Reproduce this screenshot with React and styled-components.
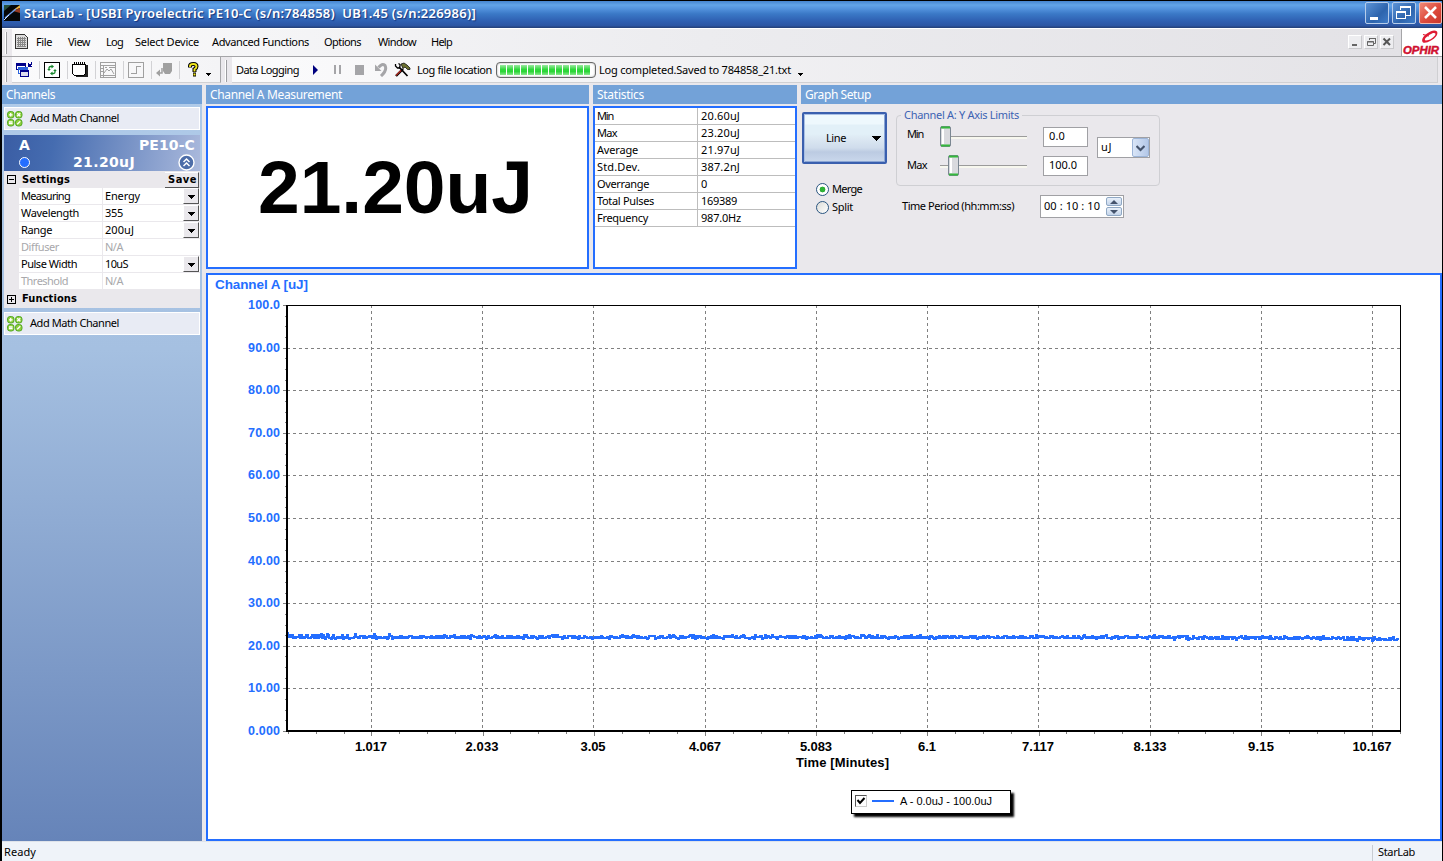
import React, { useLayoutEffect, useRef } from 'react'
import styled, { createGlobalStyle, css } from "styled-components"

const blue = '#246eff'
const face = '#eae8ec'
const ui = '"Noto Sans", "Open Sans", sans-serif'
const wide = '"DejaVu Sans", sans-serif'

const GlobalStyle = createGlobalStyle`
  * { box-sizing: border-box; }
  body {
    margin: 0;
    background: #000;
    font: 11px/14px ${ui};
    color: #000;
    overflow: hidden;
  }
  svg { display: block; flex: none; }
`

const TextBox = styled.span`
  display: inline-block;
  flex: none;
  white-space: pre;
`

// tracks the text so that it fills the given width
const Text = ({ w, children, ...rest }) => {
  const ref = useRef(null)

  useLayoutEffect(() => {
    const el = ref.current
    el.style.letterSpacing = '0px'
    const natural = el.getBoundingClientRect().width
    el.style.letterSpacing = (w - natural) / el.textContent.length + 'px'
  }, [w, children])

  return <TextBox ref={ref} {...rest}>{children}</TextBox>
}

const Window = styled.div`
  width: 1443px;
  height: 861px;
  padding: 1px 1px 0 2px;
  background: #000;
  display: flex;
  flex-direction: column;
`

const TitleBar = styled.header`
  height: 27px;
  flex: none;
  display: flex;
  align-items: center;
  padding: 0 0 3px 2px;
  background: linear-gradient(#4584cf 0, #62a4e8 4px, #5696e0 7px, #3a78c6 13px, #2f60b2 20px, #2c55a2 25px, #26447f 26px);
`

const WindowTitle = styled.h1`
  margin: 0 auto 0 4px;
  font: 600 13px/22px "Noto Sans", sans-serif;
  color: #fff;
  text-shadow: 1px 1px 1px #16337a;
`

const CaptionButton = styled.div`
  width: 24px;
  height: 22px;
  margin-left: 3px;
  border: 1px solid #b7cdea;
  border-radius: 2px;
  background: linear-gradient(135deg, #5b93d6, #2d64ad 60%, #3f7cc8);
  ${p => p.$close && css`
    width: 23px;
    border-color: #f0b9ae;
    background: linear-gradient(135deg, #f08a78, #dd4a3c 55%, #c9362c);
  `}
`

const BarRow = styled.div`
  height: ${p => p.$h}px;
  flex: none;
  display: flex;
  background: ${face};
  border-top: 1px solid ${p => p.$line || '#fff'};
`

const Grip = styled.div`
  width: 2px;
  height: 22px;
  margin: 3px 5px 0 ${p => p.$ml || 3}px;
  border-right: 1px solid #9d9da1;
  border-left: 1px solid #fff;
`

const MenuBar = styled.nav`
  flex: 1;
  display: flex;
  align-items: center;
  padding: 0 0 2px 3px;
  background: linear-gradient(90deg, #fafafb, #ececef 50%, #e3e2e6);
`

const MenuItem = styled.div`
  width: ${p => p.$w}px;
`

const Spring = styled.div`
  flex: 1;
`

const MdiButton = styled.div`
  width: 14px;
  height: 14px;
  margin-right: 2px;
  border: 1px solid #fff;
  border-right-color: #c9c9cc;
  border-bottom-color: #c9c9cc;
  background: #ededf0;
`

const Brand = styled.div`
  width: 41px;
  background: #fff;
  border-left: 1px solid #a5a5a8;
`

const ToolGroup = styled.div`
  display: flex;
  align-items: center;
  height: 26px;
  width: ${p => p.$w ? p.$w + 'px' : 'auto'};
  ${p => !p.$w && 'flex: 1; margin-right: 4px;'}
  padding-left: 4px;
  background: linear-gradient(90deg, #fbfbfc, ${p => p.$w ? '#f4f4f6' : '#e3e2e6'});
  border-bottom: 1px solid #d0d0d3;
  border-right: 1px solid ${p => p.$w ? '#a5a5a8' : '#cfcfd2'};
`

const Tool = styled.div`
  width: ${p => p.$w || 28}px;
  height: 18px;
  flex: none;
  display: flex;
  align-items: center;
  border-right: 1px solid ${p => p.$sep ? '#d2d2d5' : 'transparent'};
  margin-right: ${p => p.$mr || 0}px;
`

const Overflow = styled.div`
  padding: 10px 0 0 ${p => p.$pl || 0}px;
`

const Progress = styled.div`
  width: 100px;
  height: 16px;
  flex: none;
  margin: 0 3px 0 4px;
  padding: 2px 3px;
  display: flex;
  gap: 1px;
  border: 1px solid #686868;
  border-radius: 4px;
  background: #fff;
  box-shadow: inset 0 0 2px #999;
`

const Block = styled.i`
  width: 6px;
  height: 10px;
  background: linear-gradient(#9be9a0, #2fd83b 45%, #2bd637 65%, #8be68f);
`

const Main = styled.main`
  flex: 1;
  min-height: 0;
  display: grid;
  grid-template-columns: 200px 1fr;
  column-gap: 4px;
  padding-top: 1px;
  background: ${face};
`

const Head = styled.h2`
  height: 19px;
  margin: 0;
  padding-left: 4px;
  font: 12px/20px ${ui};
  color: #fff;
  background: #73a2d8;
`

const Sidebar = styled.aside`
  display: flex;
  flex-direction: column;
  background: linear-gradient(#b0cbe9, #a5c0e1 35%, #6684b9);
`

const MathButton = styled.button`
  height: 23px;
  margin: ${p => p.$mt || 0}px 2px 0 2px;
  padding: 0 0 2px 2px;
  display: flex;
  align-items: center;
  gap: 7px;
  font: inherit;
  border: 1px solid #fff;
  background: #e8ebf4;
  svg { margin-top: 2px; }
`

const Device = styled.section`
  margin: 5px 2px 4px 2px;
  background: ${face};
`

const DeviceHead = styled.div`
  height: 36px;
  padding: 2px 5px 0 15px;
  background: linear-gradient(100deg, #3a5da4, #456cb0 25%, #aab9dc);
  font: bold 14px/17px ${wide};
  color: #fff;
`

const HeadLine = styled.div`
  display: flex;
  justify-content: space-between;
  align-items: center;
  height: 17px;
`

const Dot = styled.i`
  width: 11px;
  height: 11px;
  border: 1px solid #fff;
  border-radius: 50%;
  background: ${blue};
`

const Section = styled.div`
  height: ${p => p.$h || 17}px;
  display: flex;
  align-items: center;
  gap: 6px;
  padding-left: 3px;
  font: bold 11px/14px "DejaVu Sans Condensed", "DejaVu Sans", sans-serif;
`

const SaveButton = styled.div`
  height: 16px;
  margin: 0 1px 0 auto;
  padding: 0 1px 0 3px;
  border-right: 1px solid #555;
  border-bottom: 1px solid #555;
  border-top: 1px solid #fff;
`

const Property = styled.div`
  height: 17px;
  margin-left: 15px;
  display: grid;
  grid-template-columns: 84px 1fr 17px;
  align-items: center;
  border-bottom: 1px solid ${face};
  background: #fff;
  color: ${p => p.$off ? '#a8a8ab' : '#000'};
`

const PropertyName = styled.div`
  height: 16px;
  line-height: 16px;
  padding-left: 2px;
  border-right: 1px solid ${face};
`

const PropertyValue = styled.div`
  height: 16px;
  line-height: 16px;
  padding-left: 2px;
`

const DropButton = styled.div`
  width: 16px;
  height: 16px;
  padding: 6px 0 0 4px;
  background: ${face};
  border: 1px solid #fff;
  border-right-color: #555;
  border-bottom-color: #555;
`

const Content = styled.div`
  display: flex;
  flex-direction: column;
  min-width: 0;
`

const TopPanels = styled.div`
  height: 184px;
  margin-bottom: 4px;
  flex: none;
  display: grid;
  grid-template-columns: 383px 204px 1fr;
  column-gap: 4px;
`

const Framed = styled.div`
  height: 163px;
  margin-top: 2px;
  border: 2px solid ${blue};
  background: #fff;
`

const Reading = styled(Framed)`
  display: flex;
  padding: 41px 0 0 50px;
  font: bold 75px/76px "Liberation Sans", Arial, sans-serif;
`

const StatRow = styled.div`
  height: 17px;
  display: grid;
  grid-template-columns: 102px 1fr;
  line-height: 16px;
  border-bottom: 1px solid #bdbdbd;
  > div { padding-left: 2px; }
  > div + div { border-left: 1px solid #bdbdbd; padding-left: 3px; }
`

const Setup = styled.div`
  display: flex;
  align-items: flex-start;
  padding: 8px 0 0 1px;
`

const SetupLeft = styled.div`
  width: 94px;
  flex: none;
`

const LineButton = styled.button`
  width: 85px;
  height: 52px;
  margin-bottom: 16px;
  padding: 0 4px 0 22px;
  display: flex;
  align-items: center;
  justify-content: space-between;
  font: inherit;
  border: 2px solid #3a5fae;
  border-radius: 2px;
  background: linear-gradient(#eef8fd 0 10px, #e2f0f8 11px 20px, #dde9f3 24px, #cfdcec 34px, #bccbe2 38px, #cad8ec);
  box-shadow: inset 1px 1px 0 #a9bfe4, inset -1px -1px 0 #8ba5d4;
`

const RadioLine = styled.label`
  display: flex;
  align-items: center;
  gap: 3px;
  height: 18px;
  margin-left: 14px;
`

const Radio = styled.i`
  width: 13px;
  height: 13px;
  border: 1px solid #2a5580;
  border-radius: 50%;
  background: ${p => p.$on
    ? 'radial-gradient(circle, #2fb336 0 2px, #23a52b 2.6px, #fff 3.2px)'
    : 'linear-gradient(135deg, #dcdcd8, #fff)'};
`

const SetupRight = styled.div`
  width: 264px;
`

const Limits = styled.fieldset`
  width: 264px;
  height: 78px;
  margin: -4px 0 0;
  padding: 0 0 0 10px;
  border: 1px solid #cfcfd3;
  border-radius: 4px;
  display: flex;
  legend {
    height: 14px;
    margin-left: -6px;
    padding: 0 3px;
    color: #3c63b3;
  }
`

const LimitRow = styled.div`
  height: 29px;
  display: flex;
  align-items: center;
`

const LimitName = styled.div`
  width: 32px;
  padding-bottom: ${p => p.$up}px;
`

const Field = styled.div`
  width: ${p => p.$w}px;
  height: ${p => p.$h}px;
  margin-left: ${p => p.$ml || 0}px;
  padding-left: ${p => p.$pl}px;
  display: flex;
  align-items: center;
  justify-content: space-between;
  line-height: 12px;
  border: 1px solid #a0a0a4;
  background: #fff;
  > span { padding-bottom: 2px; }
`

const Units = styled.div`
  padding: 15px 0 0 9px;
`

const Period = styled.div`
  display: flex;
  align-items: center;
  padding: 9px 0 0 6px;
`

const PeriodName = styled.div`
  width: 138px;
  padding: 0 0 2px;
`

const SpinColumn = styled.div`
  margin-right: 1px;
  display: grid;
  gap: 1px;
`

const SpinButton = styled.div`
  width: 16px;
  height: 9px;
  padding: 2px 0 0 3px;
  border: 1px solid #90a8c4;
  border-radius: 2px;
  background: linear-gradient(#e8f0fa, #c5d5ea);
`

const ComboArrow = styled.div`
  width: 17px;
  height: 19px;
  padding: 6px 0 0 3px;
  border: 1px solid #9db5d8;
  border-radius: 2px;
  background: linear-gradient(90deg, #d9e5f7, #b4c8e8);
`

const ChartPanel = styled.div`
  position: relative;
  height: 568px;
  border: 2px solid ${blue};
  background: #fff;
`

const Legend = styled.div`
  position: absolute;
  left: 643px;
  top: 515px;
  width: 160px;
  height: 24px;
  display: flex;
  align-items: center;
  padding: 0 0 2px 3px;
  border: 1px solid #000;
  background: #fff;
  box-shadow: 3px 3px 2px #000;
  font-family: "Liberation Sans", Arial, sans-serif;
`

const LegendBox = styled.div`
  width: 12px;
  height: 12px;
  border: 1px solid #555;
  border-right-color: #ccc;
  border-bottom-color: #ccc;
`

const LegendLine = styled.i`
  width: 22px;
  height: 2px;
  margin: 0 6px 0 5px;
  background: ${blue};
`

const StatusBar = styled.footer`
  height: 20px;
  flex: none;
  padding: 3px 0 0 2px;
  display: flex;
  justify-content: space-between;
  background: #eff3f9;
  border-top: 1px solid #dfe3ea;
`

const StatusCell = styled.div`
  width: 70px;
  padding-left: 5px;
  border-left: 1px solid #c8ccd2;
`

const menu = [
  ['File', 16, 32], ['View', 22, 38], ['Log', 17, 29], ['Select Device', 64, 77],
  ['Advanced Functions', 97, 112], ['Options', 37, 54], ['Window', 38, 53], ['Help', 21, 40],
]

const properties = [
  ['Measuring', 49, 'Energy', 35, true],
  ['Wavelength', 58, '355', 18, true],
  ['Range', 31, '200uJ', 29, true],
  ['Diffuser', 38, 'N/A', 18, false],
  ['Pulse Width', 56, '10uS', 23, true],
  ['Threshold', 47, 'N/A', 18, false],
]

const stats = [
  ['Min', 16, '20.60uJ', 39],
  ['Max', 20, '23.20uJ', 39],
  ['Average', 41, '21.97uJ', 39],
  ['Std.Dev.', 43, '387.2nJ', 39],
  ['Overrange', 52, '0', 6],
  ['Total Pulses', 57, '169389', 36],
  ['Frequency', 51, '987.0Hz', 40],
]

const Down = ({ w = 7, color = '#000' }) => (
  <svg width={w} height={(w + 1) / 2} shapeRendering="crispEdges">
    <path d={`M0 0H${w}L${w / 2} ${(w + 1) / 2}z`} fill={color} />
  </svg>
)

const AppIcon = () => (
  <svg width="16" height="16">
    <rect width="16" height="16" fill="#050708" />
    <path d="M0 6L7 0H0z" fill="#27503a" />
    <path d="M16 0L8 6L16 3z" fill="#e8b340" />
    <path d="M16 3L9 6L16 8z" fill="#933b22" />
    <path d="M1 13L7 8L12 4" stroke="#699bec" strokeWidth="1.5" fill="none" />
    <path d="M0 15L5 10" stroke="#cfe5ff" />
  </svg>
)

const SheetIcon = () => (
  <svg width="14" height="16" shapeRendering="crispEdges">
    <path d="M.5 .5H9.5L12.5 3.5V14.5H.5z" fill="#ddd" stroke="#333" />
    <path d="M3.5 3V13M5.5 3V13M7.5 3V13M9.5 3V13M2 4.5H11M2 6.5H11M2 8.5H11M2 10.5H11M2 12.5H11" stroke="#888" />
  </svg>
)

const WindowsIcon = () => (
  <svg width="17" height="16" shapeRendering="crispEdges">
    <path d="M.5 1.5H9.5V7.5H.5z" fill="#fff" stroke="#00008b" /><path d="M0 1H10V4H0z" fill="#00008b" />
    <path d="M2.5 5.5H11.5V11.5H2.5z" fill="#fff" stroke="#2b62dc" /><path d="M2 5H12V8H2z" fill="#2b62dc" />
    <path d="M4.5 8.5H12.5V14.5H4.5z" fill="#dde" stroke="#00008b" /><path d="M4 8H13V10H4z" fill="#00008b" />
    <path d="M15.5 0V2.5H12M12.5 1V5M13 4.5H16M13 3.5H15" stroke="#00008b" fill="none" />
  </svg>
)

const RefreshIcon = () => (
  <svg width="16" height="16">
    <rect x=".5" y=".5" width="15" height="15" fill="#fff" stroke="#000" />
    <path d="M5 7.5V6Q5 4.5 6.5 4.5H8M11 8.5V10Q11 11.5 9.5 11.5H8" stroke="#16852c" strokeWidth="1.3" fill="none" />
    <path d="M7.5 2.5V6.5L10 4.5zM8.5 9.5V13.5L6 11.5zM3.2 7H6.8L5 9zM9.2 9H12.8L11 7z" fill="#16852c" />
  </svg>
)

const PadIcon = () => (
  <svg width="17" height="16" shapeRendering="crispEdges">
    <path d="M3 3H16V15H4z" fill="#222" />
    <path d="M.5 2.5H13.5V11.5L11.5 13.5H2.5L.5 11.5z" fill="#fff" stroke="#000" />
    <path d="M2 1.5H13" stroke="#000" strokeWidth="3" strokeDasharray="1 1" />
  </svg>
)

const GraphIcon = () => (
  <svg width="16" height="16" fill="none" stroke="#a0a0a0">
    <path d="M.5 .5H15.5V15.5H.5zM0 3.5H16M3.5 4V15M1 13.5H15M5 5.5H7M9 5.5H15M1 6.5H3M1 9.5H3" shapeRendering="crispEdges" />
    <path d="M4 11L7 7L9 9L11 7L14 12" />
  </svg>
)

const StepIcon = () => (
  <svg width="16" height="16" fill="none" stroke="#a0a0a0" shapeRendering="crispEdges">
    <path d="M.5 .5H15.5V15.5H.5zM3 11.5H8.5V4.5H13" />
  </svg>
)

const ProbeIcon = () => (
  <svg width="17" height="16" fill="#a0a0a0">
    <path d="M7 1H16V9L14 12H9L7 9zM0 11L4 7.5V14.5z" />
    <path d="M3 11H6V6" fill="none" stroke="#a0a0a0" strokeWidth="1.5" />
  </svg>
)

const HelpIcon = () => (
  <svg width="11" height="15" fill="none">
    <path d="M2 5.5V4Q2 2 5.5 2Q8.5 2 8.5 4.5Q8.5 6 6.5 7.2V10M5 12.5H8" stroke="#000" strokeWidth="4" />
    <path d="M2 5V4Q2 2 5.5 2Q8.5 2 8.5 4.5Q8.5 6 6.5 7.2V9.5M5.5 12.5H7.5" stroke="#f2e71d" strokeWidth="1.9" />
  </svg>
)

const UndoIcon = () => (
  <svg width="14" height="14" fill="none" stroke="#a5a5a8">
    <path d="M4.5 4.5Q8 0 11 2.5Q13.5 7 7 13" strokeWidth="3" />
    <path d="M1 1.5V8H7.5z" fill="#a5a5a8" stroke="none" />
  </svg>
)

const ToolsIcon = () => (
  <svg width="17" height="16" fill="none">
    <path d="M2 14L9 7" stroke="#000" strokeWidth="2.4" /><path d="M2 13.5L8 7.5" stroke="#b12a20" strokeWidth="1.2" />
    <path d="M13.5 14L5 5" stroke="#000" strokeWidth="1.7" />
    <path d="M1.5 2V4L3.5 6H5.5L6 4V2.5L4.5 1.5" stroke="#000" strokeWidth="1.3" />
    <path d="M7 2L10 1L13 3L16 6V7.5H13.5L11 5L9 6.5z" fill="#6b7030" stroke="#000" strokeWidth=".7" />
  </svg>
)

const MathIcon = () => (
  <svg width="16" height="16">
    <g fill="#8fd03c" stroke="#4aa31d" strokeWidth=".9">
      <rect x=".5" y=".5" width="6.5" height="6.5" rx="2.5" /><rect x="8.5" y=".5" width="6.5" height="6.5" rx="2.5" />
      <rect x=".5" y="8.5" width="6.5" height="6.5" rx="2.5" /><rect x="8.5" y="8.5" width="6.5" height="6.5" rx="2.5" />
    </g>
    <path d="M3.7 2V5.6M2 3.8H5.6M10.2 2.2L13.3 5.3M13.3 2.2L10.2 5.3M2 11H5.6M2 12.7H5.6M10.2 13.3L13.3 10.2" stroke="#fff" strokeWidth="1.3" />
  </svg>
)

const CollapseIcon = () => (
  <svg width="17" height="17" fill="none" stroke="#fff">
    <circle cx="8.5" cy="8.5" r="7.5" fill="#4d6da8" strokeWidth="1.4" />
    <path d="M5.5 8L8.5 5L11.5 8M5.5 12L8.5 9L11.5 12" strokeWidth="1.5" />
  </svg>
)

const Expander = ({ plus }) => (
  <svg width="9" height="9" fill="none" stroke="#000" shapeRendering="crispEdges">
    <path d={'M.5 .5H8.5V8.5H.5zM2 4.5H7' + (plus ? 'M4.5 2V7' : '')} />
  </svg>
)

const BrandLogo = () => (
  <svg width="40" height="27">
    <path d="M21 13.5Q18 10 25 4.5Q32 -.5 35 2.5Q37 6.5 29 11.5Q24 14.5 21 13.5zM24 11.5Q29 11 32.5 7Q35 3.5 31 4Q26 6 23.5 9Q22 11.5 24 11.5z" fill="#df1b33" fillRule="evenodd" />
    <path d="M21 5.5L27 7" stroke="#df1b33" strokeWidth="1.2" />
    <text x="1" y="25" textLength="36" lengthAdjust="spacingAndGlyphs" fontFamily="Liberation Sans" fontSize="11.5" fontWeight="bold" fontStyle="italic" fill="#cf1030" stroke="#cf1030" strokeWidth=".5">OPHIR</text>
  </svg>
)

const Slider = ({ at }) => (
  <svg width="92" height="26">
    <path d="M1 12.5H88" stroke="#9b9b9b" /><path d="M1 14H88" stroke="#f7f7ee" strokeWidth="2" />
    <rect x={at + 1.5} y="2.5" width="10" height="20" rx="1.5" fill="#d9dade" stroke="#7b8792" />
    <path d={`M${at + 4} 5V20`} stroke="#fff" strokeWidth="2" />
    <path d={`M${at + 2} 3.5H${at + 11}M${at + 2} 21.5H${at + 11}`} stroke="#35b83c" strokeWidth="2" />
  </svg>
)

const PLOT = { left: 79, right: 1192, top: 30, bottom: 456 }
const yAt = v => Math.round(PLOT.bottom - v * 4.26) + 0.5
const xLabels = ['1.017', '2.033', '3.05', '4.067', '5.083', '6.1', '7.117', '8.133', '9.15', '10.167']
const xLabelWidths = [32, 33, 25, 32, 32, 18, 32, 33, 26, 39]
const yLabels = ['0.000', '10.00', '20.00', '30.00', '40.00', '50.00', '60.00', '70.00', '80.00', '90.00', '100.0']
const xAt = i => Math.round(163 + i * 111.22) + 0.5

// fixed seed, the trace is the same on every load
const trace = () => {
  let seed = 11
  let d = 'M80 357V362'
  for (let x = 81; x < PLOT.right; x++) {
    seed = (seed * 16807) % 2147483647
    const r = seed / 2147483647
    const off = r < 0.25 ? -1 : r < 0.5 ? 0 : r < 0.88 ? 1 : r < 0.93 ? -2 : r < 0.98 ? 2 : 0
    const drift = (x - 80) / 1112
    const base = 361.5 + drift * 0.8 + Math.max(0, drift - 0.75) * 6
    d += `H${x}V${Math.round(base + off * 1.05)}`
  }
  return d
}

const Chart = () => (
  <svg width="1232" height="564" fontFamily="Liberation Sans" fontSize="13" fontWeight="bold">
    <g shapeRendering="crispEdges" fill="none">
      {yLabels.map((t, i) => i % 10 !== 0 && (
        <path key={t} d={`M${PLOT.left} ${yAt(i * 10)}H${PLOT.right}`} stroke="#808080" strokeDasharray="3 3" />
      ))}
      {xLabels.map((t, i) => (
        <path key={t} d={`M${xAt(i)} ${PLOT.top}V${PLOT.bottom}`} stroke="#808080" strokeDasharray="3 3" />
      ))}
      {Array.from({ length: 41 }, (_, i) => (
        <path key={i} d={`M${i % 4 ? 77 : 75} ${yAt(i * 2.5)}H79`} stroke="#808080" />
      ))}
      {Array.from({ length: 41 }, (_, i) => (
        <path key={i} d={`M${Math.round(80 + i * 27.8) + .5} 457V${i % 4 === 3 ? 461 : 459}`} stroke="#808080" />
      ))}
      <path d={trace()} stroke={blue} strokeWidth="2" />
      <path d="M79 30.5H1192.5V457" stroke="#000" />
      <path d="M79 30V457M78 456H1193" stroke="#000" strokeWidth="2" />
    </g>
    <text x="7" y="14" textLength="93" fontSize="13.5" fill={blue}>Channel A [uJ]</text>
    {yLabels.map((t, i) => (
      <text key={t} x={40} y={Math.round(PLOT.bottom - i * 42.6) + 4} textLength="32" fontSize="12.5" fill={blue}>{t}</text>
    ))}
    {xLabels.map((t, i) => (
      <text key={t} x={xAt(i) - xLabelWidths[i] / 2 - 0.5} y="476" textLength={xLabelWidths[i]}>{t}</text>
    ))}
    <text x="588" y="492" textLength="93">Time [Minutes]</text>
  </svg>
)

const AddMath = ({ mt }) => (
  <MathButton $mt={mt}><MathIcon /><Text w={89}>Add Math Channel</Text></MathButton>
)

const Limit = ({ name, w, up, at, value, vw }) => (
  <LimitRow>
    <LimitName $up={up}><Text w={w}>{name}</Text></LimitName>
    <Slider at={at} />
    <Field $w={45} $h={20} $pl={5} $ml={12}><Text w={vw}>{value}</Text></Field>
  </LimitRow>
)

const App = () => (
  <>
    <GlobalStyle />
    <Window>
      <TitleBar>
        <AppIcon />
        <WindowTitle><Text w={452}>{'StarLab - [USBI Pyroelectric PE10-C (s/n:784858)  UB1.45 (s/n:226986)]'}</Text></WindowTitle>
        <CaptionButton><svg width="22" height="20"><path d="M4 15.5H12" stroke="#fff" strokeWidth="3" /></svg></CaptionButton>
        <CaptionButton>
          <svg width="22" height="20" fill="none" stroke="#fff" shapeRendering="crispEdges">
            <path d="M7.5 7V3.5H17.5V12.5H13M7 4.5H18M3.5 8.5H12.5V15.5H3.5zM3 9.5H13" />
          </svg>
        </CaptionButton>
        <CaptionButton $close><svg width="21" height="20"><path d="M5 4L16 15M16 4L5 15" stroke="#fff" strokeWidth="2.6" /></svg></CaptionButton>
      </TitleBar>

      <BarRow $h={28}>
        <Grip />
        <MenuBar>
          <Tool $w={21}><SheetIcon /></Tool>
          {menu.map(([name, w, step]) => (
            <MenuItem key={name} $w={step}><Text w={w}>{name}</Text></MenuItem>
          ))}
          <Spring />
          <MdiButton><svg width="12" height="12"><path d="M3 9H8" stroke="#666" strokeWidth="2" /></svg></MdiButton>
          <MdiButton><svg width="12" height="12" fill="none" stroke="#666"><path d="M4.5 4V2.5H10.5V7.5H9M4 2.5H11M2.5 5.5H8.5V9.5H2.5zM2 6H9" /></svg></MdiButton>
          <MdiButton><svg width="12" height="12"><path d="M2.5 2.5L9 9M9 2.5L2.5 9" stroke="#555" strokeWidth="2" /></svg></MdiButton>
          <Tool $w={5} />
        </MenuBar>
        <Brand><BrandLogo /></Brand>
      </BarRow>

      <BarRow $h={28} $line="#a5a5a8">
        <Grip />
        <ToolGroup $w={209}>
          <Tool $w={24} $sep $mr={4}><WindowsIcon /></Tool>
          <Tool $w={24} $sep $mr={4}><RefreshIcon /></Tool>
          <Tool $w={24} $sep $mr={4}><PadIcon /></Tool>
          <Tool $w={24} $sep $mr={4}><GraphIcon /></Tool>
          <Tool $w={24} $sep $mr={4}><StepIcon /></Tool>
          <Tool $w={24} $sep $mr={8}><ProbeIcon /></Tool>
          <Tool $w={18}><HelpIcon /></Tool>
          <Overflow><Down w={5} /></Overflow>
        </ToolGroup>
        <Grip $ml={4} />
        <ToolGroup>
          <Tool $w={77}><Text w={63}>Data Logging</Text></Tool>
          <Tool $w={21}><svg width="6" height="10"><path d="M0 0L5 5L0 10z" fill="#00007e" /></svg></Tool>
          <Tool $w={21}><svg width="7" height="9"><path d="M1 0V9M6 0V9" stroke="#a5a5a8" strokeWidth="2" /></svg></Tool>
          <Tool $w={19}><svg width="9" height="10"><path d="M0 0H9V10H0z" fill="#a5a5a8" /></svg></Tool>
          <Tool $w={20}><UndoIcon /></Tool>
          <Tool $w={23}><ToolsIcon /></Tool>
          <Text w={75}>Log file location</Text>
          <Progress>{Array.from({ length: 13 }, (_, i) => <Block key={i} />)}</Progress>
          <Text w={192}>Log completed.Saved to 784858_21.txt</Text>
          <Overflow $pl={7}><Down w={5} /></Overflow>
        </ToolGroup>
      </BarRow>

      <Main>
        <Sidebar>
          <Head><Text w={49}>Channels</Text></Head>
          <AddMath mt={3} />
          <Device>
            <DeviceHead>
              <HeadLine><Text w={11}>A</Text><Text w={56}>PE10-C</Text></HeadLine>
              <HeadLine><Dot /><Text w={62}>21.20uJ</Text><CollapseIcon /></HeadLine>
            </DeviceHead>
            <Section>
              <Expander /><Text w={48}>Settings</Text>
              <SaveButton><Text w={29}>Save</Text></SaveButton>
            </Section>
            {properties.map(([name, w, value, vw, on]) => (
              <Property key={name} $off={!on}>
                <PropertyName><Text w={w}>{name}</Text></PropertyName>
                <PropertyValue><Text w={vw}>{value}</Text></PropertyValue>
                {on && <DropButton><Down /></DropButton>}
              </Property>
            ))}
            <Section $h={18}><Expander plus /><Text w={55}>Functions</Text></Section>
          </Device>
          <AddMath />
        </Sidebar>

        <Content>
          <TopPanels>
            <div>
              <Head><Text w={132}>Channel A Measurement</Text></Head>
              <Reading><Text w={275}>21.20uJ</Text></Reading>
            </div>
            <div>
              <Head><Text w={47}>Statistics</Text></Head>
              <Framed>
                {stats.map(([name, w, value, vw]) => (
                  <StatRow key={name}>
                    <div><Text w={w}>{name}</Text></div>
                    <div><Text w={vw}>{value}</Text></div>
                  </StatRow>
                ))}
              </Framed>
            </div>
            <div>
              <Head><Text w={66}>Graph Setup</Text></Head>
              <Setup>
                <SetupLeft>
                  <LineButton><Text w={20}>Line</Text><Down w={9} /></LineButton>
                  <RadioLine><Radio $on /><Text w={30}>Merge</Text></RadioLine>
                  <RadioLine><Radio /><Text w={21}>Split</Text></RadioLine>
                </SetupLeft>
                <SetupRight>
                  <Limits>
                    <legend><Text w={115}>Channel A: Y Axis Limits</Text></legend>
                    <div>
                      <Limit name="Min" w={16} up={5} at={0} value="0.0" vw={16} />
                      <Limit name="Max" w={20} up={1} at={8} value="100.0" vw={28} />
                    </div>
                    <Units>
                      <Field $w={53} $h={21} $pl={3}><Text w={11}>uJ</Text>
                        <ComboArrow><svg width="9" height="7"><path d="M0.5 1L4.5 5L8.5 1" stroke="#44536c" strokeWidth="2.2" fill="none" /></svg></ComboArrow>
                      </Field>
                    </Units>
                  </Limits>
                  <Period>
                    <PeriodName><Text w={112}>Time Period (hh:mm:ss)</Text></PeriodName>
                    <Field $w={84} $h={23} $pl={3}><Text w={56}>00 : 10 : 10</Text>
                      <SpinColumn>
                        <SpinButton><svg width="8" height="4"><path d="M0 4L4 0L8 4z" fill="#44536c" /></svg></SpinButton>
                        <SpinButton><svg width="8" height="4"><path d="M0 0H8L4 4z" fill="#44536c" /></svg></SpinButton>
                      </SpinColumn>
                    </Field>
                  </Period>
                </SetupRight>
              </Setup>
            </div>
          </TopPanels>
          <ChartPanel>
            <Chart />
            <Legend>
              <LegendBox><svg width="10" height="10"><path d="M1.5 4L4 7L8.5 2" stroke="#000" strokeWidth="2" fill="none" /></svg></LegendBox>
              <LegendLine />
              <Text w={92}>A - 0.0uJ - 100.0uJ</Text>
            </Legend>
          </ChartPanel>
        </Content>
      </Main>

      <StatusBar>
        <Text w={32}>Ready</Text>
        <StatusCell><Text w={37}>StarLab</Text></StatusCell>
      </StatusBar>
    </Window>
  </>
)

export default App
